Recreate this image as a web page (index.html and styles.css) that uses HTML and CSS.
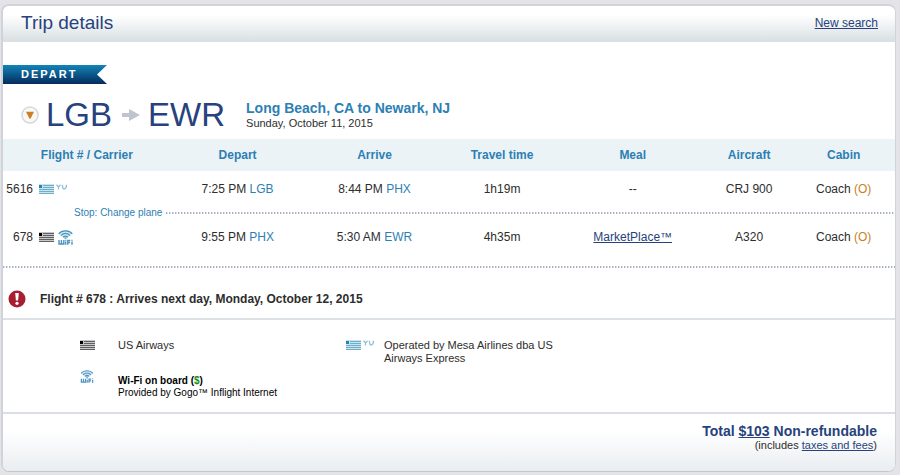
FILE: index.html
```html
<!DOCTYPE html>
<html lang="en">
<head>
<meta charset="utf-8">
<title>Trip details</title>
<link rel="stylesheet" href="styles.css">
</head>
<body>
<svg class="defs" aria-hidden="true">
  <symbol id="flag" viewBox="0 0 15 10">
    <path d="M0 0h15v10H0z" fill="currentColor" opacity=".35"/>
    <path d="M4 1h11v1H4zM4 3h11v1H4zM0 5h15v1H0zM0 7h15v1H0zM0 9h15v1H0z" fill="currentColor"/>
    <path d="M0 1h3v3H0z" fill="var(--canton)"/>
  </symbol>
  <symbol id="yv" viewBox="0 0 11 10">
    <path d="M.5 .8L2.500 3L4.500 .8M2.500 3V5.500M6.500 .8V2.500C6.500 4 7.500 4.800 8.300 5C9.500 4.500 10.400 3.500 10.400 2V.8" fill="none" stroke="currentColor" stroke-width="1.300"/>
  </symbol>
  <symbol id="wifi" viewBox="0 0 15 15">
    <path d="M.5 3.800C4 -.8 11 -.8 14.500 3.800L9.500 8h-4z" fill="currentColor" opacity=".2"/>
    <g fill="none" stroke="currentColor" stroke-width="1.300">
      <path d="M.7 3.800C4 -.2 11 -.2 14.300 3.800"/>
      <path d="M3 5.600C5.500 2.700 9.500 2.700 12 5.600"/>
      <path d="M5.200 7.300C6.500 5.800 8.500 5.800 9.800 7.300"/>
    </g>
    <path d="M6.500 7.500h2v1.300h-2z" fill="currentColor"/>
    <path d="M1 10v4h4.800V10M3.400 10v4M7.700 11.500V14.700M7.700 9.800v.9M9.800 14.700V10.500H12.300M9.800 12.500h2.300M14 11.500V14.700M14 9.800v.9" fill="none" stroke="currentColor" stroke-width="1.400"/>
  </symbol>
</svg>
<main class="panel">
  <header class="panel-head">
    <h1>Trip details</h1>
    <a href="#">New search</a>
  </header>

  <div class="ribbon">DEPART</div>

  <section class="route">
    <button class="toggle" type="button" aria-label="Collapse flight">
      <svg viewBox="0 0 18 18"><circle cx="9" cy="9" r="8" fill="#f8f8f6" stroke="#d3d8dc" stroke-width="1.500"/><path d="M5 5.800h8L9.500 12.800h-1z" fill="#cb7f22"/></svg>
    </button>
    <span class="code">LGB</span>
    <svg class="arrow" viewBox="0 0 18 14" aria-hidden="true"><path d="M0 5h7V1l11 6-11 6V9H0z" fill="#c0c4ce"/></svg>
    <span class="code">EWR</span>
    <div class="route-info">
      <h2>Long Beach, CA to Newark, NJ</h2>
      <p>Sunday, October 11, 2015</p>
    </div>
  </section>

  <table class="flights">
    <colgroup><col class="c-flight"><col class="c-depart"><col class="c-arrive"><col class="c-time"><col class="c-meal"><col class="c-craft"><col class="c-cabin"></colgroup>
    <thead>
      <tr><th>Flight # / Carrier</th><th>Depart</th><th>Arrive</th><th>Travel time</th><th>Meal</th><th>Aircraft</th><th>Cabin</th></tr>
    </thead>
    <tbody>
      <tr>
        <td><div class="flight"><span class="num">5616</span><svg class="flag blue"><use href="#flag"/></svg><svg class="yv"><use href="#yv"/></svg></div></td>
        <td>7:25 PM <span class="airport">LGB</span></td>
        <td>8:44 PM <span class="airport">PHX</span></td>
        <td>1h19m</td>
        <td>--</td>
        <td>CRJ 900</td>
        <td>Coach <span class="class">(O)</span></td>
      </tr>
      <tr class="stop"><td colspan="7"><div class="stop-line">Stop: Change plane</div></td></tr>
      <tr>
        <td><div class="flight"><span class="num">678</span><svg class="flag"><use href="#flag"/></svg><svg class="wifi"><use href="#wifi"/></svg></div></td>
        <td>9:55 PM <span class="airport">PHX</span></td>
        <td>5:30 AM <span class="airport">EWR</span></td>
        <td>4h35m</td>
        <td><a href="#">MarketPlace™</a></td>
        <td>A320</td>
        <td>Coach <span class="class">(O)</span></td>
      </tr>
    </tbody>
  </table>

  <section class="alert">
    <svg viewBox="0 0 18 18" aria-hidden="true"><circle cx="9" cy="9" r="8.500" fill="#a81d30"/><path d="M7.200 3h3.600l-.7 7.500H7.900z" fill="#fff"/><circle cx="9" cy="13.300" r="1.600" fill="#fff"/></svg>
    <strong>Flight # 678 : Arrives next day, Monday, October 12, 2015</strong>
  </section>

  <section class="legend">
    <div class="item">
      <span class="icon"><svg class="flag"><use href="#flag"/></svg></span>
      <p>US Airways</p>
    </div>
    <div class="item">
      <span class="icon"><svg class="flag blue"><use href="#flag"/></svg><svg class="yv"><use href="#yv"/></svg></span>
      <p>Operated by Mesa Airlines dba US Airways Express</p>
    </div>
    <div class="item">
      <span class="icon"><svg class="wifi small"><use href="#wifi"/></svg></span>
      <p class="wifi-text"><strong>Wi-Fi on board (<span class="dollar">$</span>)</strong><br>Provided by Gogo™ Inflight Internet</p>
    </div>
  </section>

  <footer class="total">
    <p class="price">Total <a href="#">$103</a> Non-refundable</p>
    <p class="note">(includes <a href="#">taxes and fees</a>)</p>
  </footer>
</main>
</body>
</html>
```
FILE: styles.css
```css
* { box-sizing: border-box; }
body {
  margin: 0;
  padding: 4px 4px 3px 1px;
  background: #e4e4e8;
  color: #2d2d2d;
  font: 12px/14px "Liberation Sans", Arial, sans-serif;
  --dots: repeating-linear-gradient(90deg, #a9b0c4 0 1px, #dde0e9 1px 2px, #fff 2px 3px);
}
h1, h2, p { margin: 0; }
a { color: #27427c; text-decoration: underline; }
.defs { position: absolute; width: 0; height: 0; }

.panel {
  background: #fff;
  border: 2px solid #d0d4da;
  border-right-width: 1px;
  border-bottom: 1px solid #c0c8d2;
  border-radius: 8px;
  overflow: hidden;
}
.panel-head {
  display: flex;
  justify-content: space-between;
  align-items: center;
  height: 36px;
  padding: 0 17px 2px 18px;
  background: linear-gradient(#fff 25%, #d8dfe2);
}
h1 { font-size: 19px; line-height: 24px; font-weight: normal; color: #27427c; }

.ribbon {
  width: 104px;
  height: 19px;
  margin-top: 23px;
  padding-left: 18px;
  background: linear-gradient(#1285b8, #062a5c);
  clip-path: polygon(0 0, 100% 0, 94px 50%, 100% 100%, 0 100%);
  color: #fff;
  font-size: 11px;
  font-weight: bold;
  line-height: 19px;
  letter-spacing: 2px;
}

.route { display: flex; align-items: center; height: 55px; padding: 6px 0 0 18px; }
.toggle { width: 18px; height: 18px; padding: 0; border: 0; background: none; margin-right: 7px; }
.toggle svg { display: block; width: 18px; height: 18px; }
.code { font-size: 33px; line-height: 40px; color: #27427c; }
.arrow { width: 18px; height: 14px; margin: 0 8px 0 10px; }
.route-info { margin-left: 21px; }
.route-info h2 { font-size: 14px; line-height: 16px; color: #2d7fb3; }
.route-info p { font-size: 11px; line-height: 14px; }

.flights { width: 100%; table-layout: fixed; border-collapse: collapse; text-align: center; }
.c-flight { width: 18.8%; }
.c-depart { width: 15%; }
.c-arrive { width: 15.7%; }
.c-time { width: 12.9%; }
.c-meal { width: 16.4%; }
.c-craft { width: 9.7%; }
.c-cabin { width: 11.5%; }
.flights th { height: 32px; padding: 0; background: #ebf3f7; color: #2d7fb3; }
.flights td { height: 36px; padding: 0; }
.flights .stop td { height: 12px; }
.flight { display: flex; align-items: center; }
.num { width: 30px; margin-right: 6px; text-align: right; }
.airport { color: #2d7fb3; }
.class { color: #cb7f22; }
.stop-line {
  display: flex;
  align-items: center;
  gap: 4px;
  padding-left: 71px;
  color: #2d7fb3;
  font-size: 10px;
  line-height: 12px;
}
.stop-line::after { content: ""; flex: 1; height: 2px; background: var(--dots); }

.flag { width: 15px; height: 10px; color: #606064; --canton: #000; }
.flag.blue { color: #6cb0cc; --canton: #2386b0; }
.yv { width: 11px; height: 10px; margin-left: 2px; color: #8fc0d8; }
.wifi { width: 15px; height: 15px; margin-left: 4px; color: #4a94c0; }
.wifi.small { width: 14px; height: 13px; margin: 0; }

.alert {
  display: flex;
  align-items: center;
  gap: 14px;
  height: 52px;
  margin-top: 11px;
  padding: 13px 5px 0;
  background: var(--dots) top / 100% 2px no-repeat;
}
.alert svg { width: 18px; height: 18px; }

.legend {
  display: grid;
  grid-template-columns: 266px 240px;
  row-gap: 4px;
  padding: 19px 0 13px 77px;
  border-top: 2px solid #dbe1e5;
  border-bottom: 2px solid #dcdee5;
  font-size: 11px;
  line-height: 13px;
}
.item { display: flex; }
.icon { display: flex; flex: none; width: 38px; padding-top: 1px; }
.wifi-text { padding-top: 6px; color: #000; font-size: 10px; line-height: 12px; }
.dollar { color: #109010; }

.total {
  height: 57px;
  padding: 9px 18px 0 0;
  background: linear-gradient(#fff 30%, #e9edf0);
  text-align: right;
}
.price { color: #27427c; font-size: 14px; line-height: 16px; font-weight: bold; }
.note { font-size: 11px; line-height: 12px; }
```
